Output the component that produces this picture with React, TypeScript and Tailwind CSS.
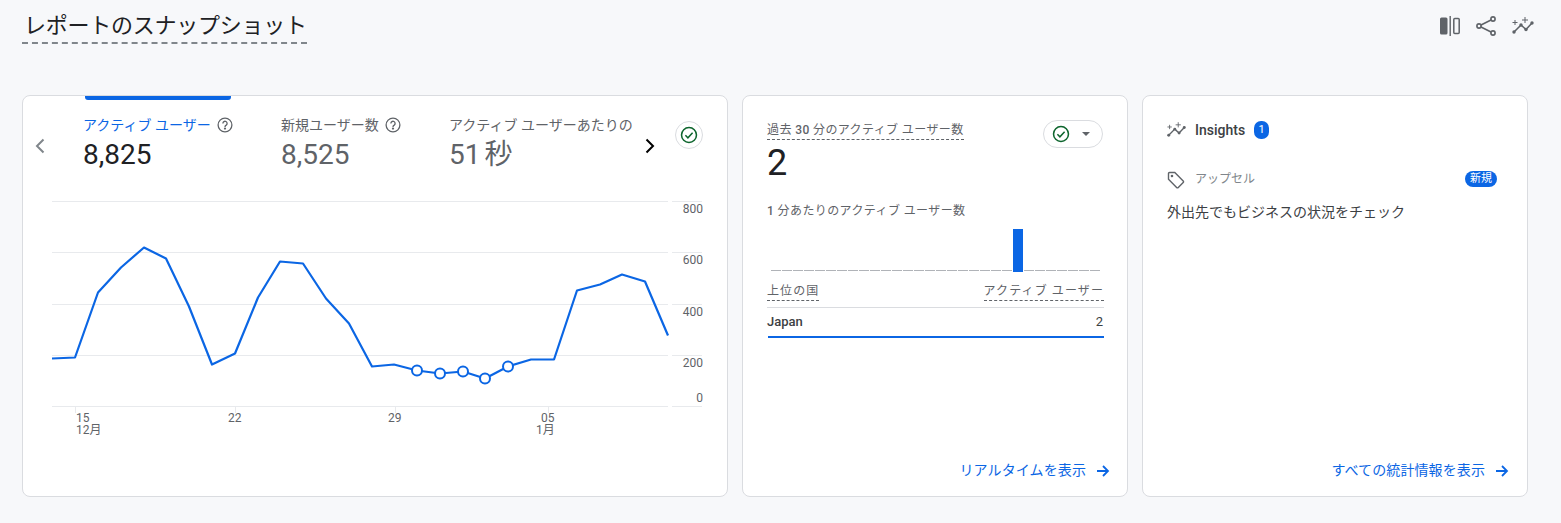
import React from 'react';

const FONT = "font-['Roboto','Noto_Sans_CJK_JP',sans-serif]";

const linePoints = [
  [0, 157], [23, 156], [46, 91], [69, 66], [92, 46], [114, 57], [137, 105], [160, 163], [183, 152], [206, 96],
  [228, 60], [251, 62], [274, 97], [297, 122], [320, 165], [342, 163], [365, 169], [388, 172], [411, 170],
  [433, 177], [456, 165], [479, 158], [502, 158], [525, 89], [548, 83], [570, 73], [593, 80], [616, 134],
];

const CheckBadge = () => (
  <svg viewBox="0 0 20 20" className="w-[18px] h-[18px]" fill="none" stroke="#0d652d" strokeWidth="1.7">
    <circle cx="10" cy="10" r="8.3" />
    <path d="M6 10.3l2.8 2.8L14 7.6" />
  </svg>
);

const HelpIcon = () => (
  <svg viewBox="0 0 16 16" className="w-[16px] h-[16px]" fill="none" stroke="#5f6368" strokeWidth="1.3">
    <circle cx="8" cy="8" r="6.9" />
    <path d="M5.9 6.4a2.1 2.1 0 1 1 3.3 1.7c-.8.5-1.2.9-1.2 1.8" />
    <circle cx="8" cy="11.6" r=".5" fill="#5f6368" />
  </svg>
);

const ArrowRight = ({ className = '' }: { className?: string }) => (
  <svg viewBox="0 0 14 14" className={`w-[14px] h-[14px] ${className}`} fill="none" stroke="#0b66e4" strokeWidth="1.8">
    <path d="M1 7h11M7 2l5 5-5 5" />
  </svg>
);

const InsightsIcon = ({ className }: { className: string }) => (
  <svg viewBox="0 0 22 18" className={className} fill="#5f6368" stroke="#5f6368">
    <path d="M2 15l7-7 5 4.5 6-6.5" fill="none" strokeWidth="1.6" />
    <circle cx="2" cy="15" r="1.7" stroke="none" />
    <circle cx="9" cy="8" r="1.7" stroke="none" />
    <circle cx="14" cy="12.5" r="1.7" stroke="none" />
    <circle cx="20" cy="6" r="1.7" stroke="none" />
    <path d="M3 3v5M.5 5.5h5M13 0v6M10 3h6" fill="none" strokeWidth="1" />
  </svg>
);

const Tab = ({ label, value, active, help, width }: { label: string; value: string; active?: boolean; help?: boolean; width: string }) => (
  <div className={`${width} shrink-0 overflow-hidden`}>
    <div className={`flex items-center gap-[6px] h-[18px] text-[14px] whitespace-nowrap ${active ? 'text-[#0b66e4]' : 'text-[#5f6368]'}`}>
      <span>{label}</span>
      {help && <HelpIcon />}
    </div>
    <div className={`text-[28px] leading-[36px] mt-[3px] whitespace-nowrap [word-spacing:-3px] ${active ? 'text-[#202124]' : 'text-[#5f6368]'}`}>{value}</div>
  </div>
);

const Chart = () => (
  <svg width="704" height="250" viewBox="0 0 704 250" className="block">
    {[0, 51, 103, 154, 205].map((y) => (
      <g key={y} stroke="#e8eaed">
        <line x1="29" x2="645" y1={y + 0.5} y2={y + 0.5} />
        <line x1="649" x2="679" y1={y + 0.5} y2={y + 0.5} />
      </g>
    ))}
    <g transform="translate(29 0.5)">
      <polyline
        points={linePoints.map((p) => p.join(',')).join(' ')}
        fill="none"
        stroke="#0b66e4"
        strokeWidth="2.2"
        strokeLinejoin="round"
      />
      {linePoints.slice(16, 21).map(([x, y]) => (
        <circle key={x} cx={x} cy={y} r="5" fill="#fff" stroke="#0b66e4" strokeWidth="2" />
      ))}
    </g>
    <g fill="#5f6368" fontSize="12" textAnchor="end">
      <text x="680" y="12">800</text>
      <text x="680" y="63">600</text>
      <text x="680" y="115">400</text>
      <text x="680" y="166">200</text>
      <text x="680" y="201">0</text>
    </g>
    <line x1="52.5" x2="52.5" y1="206" y2="212" stroke="#e8eaed" />
    <line x1="212.5" x2="212.5" y1="206" y2="212" stroke="#e8eaed" />
    <line x1="372.5" x2="372.5" y1="206" y2="212" stroke="#e8eaed" />
    <line x1="525.5" x2="525.5" y1="206" y2="212" stroke="#e8eaed" />
    <g fill="#5f6368" fontSize="12">
      <text x="53" y="221">15</text>
      <text x="53" y="233">12月</text>
      <text x="205" y="221">22</text>
      <text x="365" y="221">29</text>
      <text x="518" y="221">05</text>
      <text x="513" y="233">1月</text>
    </g>
  </svg>
);

const CardLink = ({ label, arrowClass }: { label: string; arrowClass?: string }) => (
  <div className="mt-auto flex justify-end items-center gap-[10px] text-[14px] tracking-[0.1px] text-[#0b66e4]">
    <span>{label}</span>
    <ArrowRight className={arrowClass} />
  </div>
);

export default function App() {
  return (
    <div className={`${FONT} w-[1561px] h-[523px] overflow-hidden bg-[#f7f8fa] px-[22px] pt-[11px] text-[#202124]`}>
      {/* Header */}
      <div className="flex items-start justify-between h-[84px]">
        <h2 className="text-[22px] leading-[30px] pl-[2px] pb-[1px] tracking-[-0.25px] font-normal border-b-2 border-dashed border-[#80868b]">
          レポートのスナップショット
        </h2>
        <div className="flex items-center gap-[16px] mr-[5px] mt-[4px]">
          <svg viewBox="0 0 20 22" className="w-[20px] h-[22px]">
            <rect x="0" y="2.5" width="7.5" height="17" rx="1.5" fill="#5f6368" />
            <rect x="9.5" y="1" width="1.4" height="20" fill="#5f6368" />
            <rect x="13.8" y="3.5" width="5.4" height="15" rx="1" fill="none" stroke="#5f6368" strokeWidth="1.5" />
          </svg>
          <svg viewBox="0 0 20 20" className="w-[20px] h-[20px]" fill="none" stroke="#5f6368" strokeWidth="1.6">
            <path d="M3 10L17 3M3 10l14 7" />
            <circle cx="3" cy="10" r="2.1" fill="#f7f8fa" />
            <circle cx="17" cy="3" r="2.1" fill="#f7f8fa" />
            <circle cx="17" cy="17" r="2.1" fill="#f7f8fa" />
          </svg>
          <InsightsIcon className="w-[22px] h-[18px]" />
        </div>
      </div>

      {/* Cards */}
      <div className="flex gap-[14px] h-[402px]">
        <section className="relative w-[706px] shrink-0 bg-white border border-[#dadce0] rounded-[8px] overflow-hidden">
          <div className="absolute left-[62px] top-0 w-[146px] h-[4px] bg-[#0b66e4] rounded-b-[3px]" />
          <div className="flex h-[105px] pt-[20px]">
            <div className="w-[60px] shrink-0 pl-[12px] pt-[22px]">
              <svg viewBox="0 0 10 16" className="w-[10px] h-[16px]" fill="none" stroke="#80868b" strokeWidth="2">
                <path d="M8.5 1.5L2 8l6.5 6.5" />
              </svg>
            </div>
            <Tab width="w-[198px]" label="アクティブ ユーザー" value="8,825" active help />
            <Tab width="w-[168px]" label="新規ユーザー数" value="8,525" help />
            <Tab width="w-[192px]" label="アクティブ ユーザーあたりの" value="51 秒" />
            <div className="w-[18px] shrink-0 pt-[22px]">
              <svg viewBox="0 0 10 16" className="w-[10px] h-[16px] ml-[4px]" fill="none" stroke="#000" strokeWidth="2">
                <path d="M1.5 1.5L8 8l-6.5 6.5" />
              </svg>
            </div>
            <div className="ml-[16px] w-[28px] h-[28px] mt-[5px] rounded-full border border-[#dadce0] flex items-center justify-center shrink-0">
              <CheckBadge />
            </div>
          </div>
          <Chart />
        </section>

        <section className="w-[386px] shrink-0 bg-white border border-[#dadce0] rounded-[8px] pl-[24px] pr-[23px] pt-[21px] pb-[15px] flex flex-col">
          <div className="flex justify-between items-start">
            <div>
              <div className="inline-block text-[12px] leading-[18px] tracking-[0.4px] text-[#5f6368] border-b border-dashed border-[#5f6368]">
                過去 <b className="font-medium">30</b> 分のアクティブ ユーザー数
              </div>
              <div className="text-[36px] leading-[44px]">2</div>
            </div>
            <div className="flex items-center w-[60px] h-[28px] mt-[3px] rounded-full border border-[#dadce0] pl-[8px] mr-[1px]">
              <CheckBadge />
              <svg viewBox="0 0 10 5" className="w-[8px] h-[4px] ml-[12px]" fill="#5f6368">
                <path d="M0 0h10L5 5z" />
              </svg>
            </div>
          </div>
          <div className="mt-[17px] text-[12px] leading-[18px] tracking-[0.4px] text-[#5f6368]">
            <b className="font-medium">1</b> 分あたりのアクティブ ユーザー数
          </div>
          <div className="flex items-end gap-[1px] h-[43px] mt-[9px] ml-[4px]">
            {Array.from({ length: 30 }, (_, i) =>
              i === 22 ? (
                <div key={i} className="w-[10px] h-[43px] bg-[#0b66e4]" />
              ) : (
                <div key={i} className="w-[10px] h-[1px] bg-[#b0b3b8] mb-[1px]" />
              ),
            )}
          </div>
          <div className="flex justify-between items-start mt-[11px] h-[25px] border-b border-[#dadce0] text-[12px] text-[#5f6368]">
            <span className="leading-[17px] tracking-[1.1px] border-b border-dashed border-[#5f6368]">上位の国</span>
            <span className="leading-[17px] tracking-[1.1px] border-b border-dashed border-[#5f6368]">アクティブ ユーザー</span>
          </div>
          <div className="flex justify-between items-center h-[30px] border-b-2 border-[#0b66e4] text-[13px] ml-[1px] pr-[1px] text-[#3c4043]">
            <span className="font-medium -ml-[1px]">Japan</span>
            <span>2</span>
          </div>
          <CardLink label="リアルタイムを表示" arrowClass="-mr-[6px]" />
        </section>

        <section className="w-[386px] shrink-0 bg-white border border-[#dadce0] rounded-[8px] pl-[24px] pr-[18px] pt-[24px] pb-[15px] flex flex-col">
          <div className="flex items-center h-[20px]">
            <InsightsIcon className="w-[19px] h-[16px]" />
            <span className="ml-[9px] text-[14px] font-medium text-[#3c4043]">Insights</span>
            <span className="ml-[9px] w-[15px] h-[18px] rounded-[7px] bg-[#0b66e4] text-white text-[11px] flex items-center justify-center">1</span>
          </div>
          <div className="flex items-center mt-[27px] h-[24px]">
            <svg viewBox="0 0 18 18" className="w-[18px] h-[18px] mt-[1px]" fill="none" stroke="#5f6368" strokeWidth="1.4">
              <path d="M1.5 2.5a1 1 0 0 1 1-1h5.3l8.4 8.4a1.2 1.2 0 0 1 0 1.7l-4.9 4.9a1.2 1.2 0 0 1-1.7 0L1.5 8.2z" />
              <circle cx="5" cy="5" r=".6" fill="#5f6368" />
            </svg>
            <span className="ml-[10px] text-[12px] text-[#80868b]">アップセル</span>
            <span className="ml-auto mr-[12px] w-[32px] h-[16px] rounded-full bg-[#0b66e4] text-white text-[11px] leading-[16px] text-center">新規</span>
          </div>
          <p className="mt-[11px] text-[14px] leading-[20px] text-[#3c4043]">外出先でもビジネスの状況をチェック</p>
          <CardLink label="すべての統計情報を表示" />
        </section>
      </div>
    </div>
  );
}
